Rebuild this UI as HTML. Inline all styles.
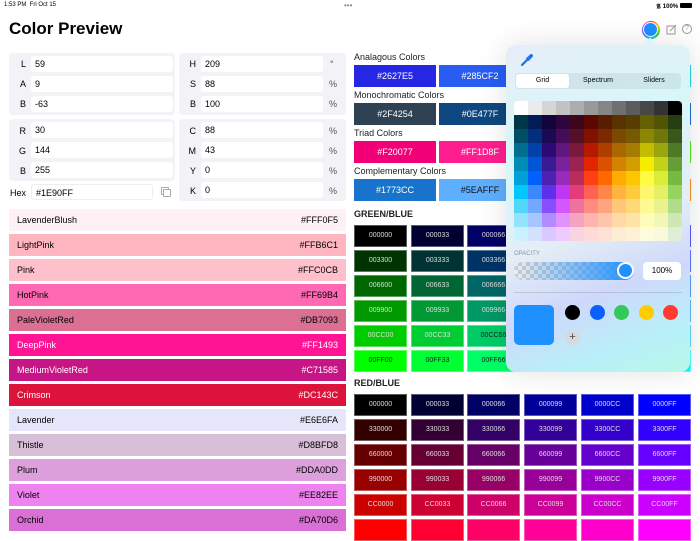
<!DOCTYPE html><html><head><meta charset="utf-8"><style>
*{box-sizing:border-box;margin:0;padding:0}
body{width:700px;height:525px;overflow:hidden;background:#fff;font-family:"Liberation Sans",sans-serif;position:relative;color:#000}
.a{position:absolute}
.grp{position:absolute;background:#f2f2f7;border-radius:4px}
.lb{position:absolute;font-size:9px;width:10px;text-align:right}
.fd{position:absolute;background:#fff;border-radius:3px;height:16px;font-size:9px;padding-left:4px;line-height:16px}
.un{position:absolute;font-size:9px;color:#555}
.row{position:absolute;left:9px;width:337px;height:22px;font-size:9px;line-height:22px;padding:0 8px}
.row span{float:right}
.sec{position:absolute;left:354px;font-size:9px;color:#222}
.sw{position:absolute;width:82px;height:22px;font-size:9px;line-height:22px;text-align:center;color:#fff}
.c{position:absolute;width:53px;height:22px;font-size:7px;line-height:22px;text-align:center;color:#ddd;outline:1px solid rgba(255,255,255,.35);outline-offset:-1px}
.k{color:#222}
.h{font-size:9px;font-weight:bold;position:absolute;left:354px;color:#222}
.pg{display:grid;grid-template-columns:repeat(12,14px);grid-auto-rows:14px}
</style></head><body>
<div class="a" style="left:4px;top:2px;font-size:6px">1:53 PM&nbsp;&nbsp;Fri Oct 15</div>
<div class="a" style="left:344px;top:1px;font-size:8px;color:#888">•••</div>
<div class="a" style="left:656px;top:2px;font-size:6px;font-weight:bold">᯾ 100% <span style="display:inline-block;width:12px;height:5px;background:#000;border-radius:1px"></span></div>
<div class="a" style="left:9px;top:19px;font-size:17px;font-weight:bold">Color Preview</div>
<div class="a" style="left:642px;top:21px;width:18px;height:18px;border-radius:50%;background:conic-gradient(#f33,#fc0,#3c3,#0cf,#36f,#c3f,#f33)"></div>
<div class="a" style="left:643px;top:22px;width:13px;height:13px;border-radius:50%;background:#1e90ff;border:1.5px solid #fff;box-sizing:content-box"></div>
<svg class="a" style="left:666px;top:24px" width="11" height="11" viewBox="0 0 11 11"><rect x="1" y="2" width="8" height="8" fill="none" stroke="#999" stroke-width="1"/><path d="M4 7 L10 1" stroke="#999" stroke-width="1"/></svg>
<div class="a" style="left:682px;top:24px;width:10px;height:10px;border:1px solid #999;border-radius:50%;font-size:7px;line-height:8px;text-align:center;color:#999">?</div>

<div class="grp" style="left:9px;top:53px;width:166px;height:62px"></div>
<div class="grp" style="left:179px;top:53px;width:167px;height:62px"></div>
<div class="grp" style="left:9px;top:119px;width:166px;height:62px"></div>
<div class="grp" style="left:179px;top:119px;width:167px;height:82px"></div>
<div class="lb" style="left:16px;top:59px">L</div><div class="fd" style="left:31px;top:56px;width:142px">59</div>
<div class="lb" style="left:16px;top:79px">A</div><div class="fd" style="left:31px;top:76px;width:142px">9</div>
<div class="lb" style="left:16px;top:99px">B</div><div class="fd" style="left:31px;top:96px;width:142px">-63</div>
<div class="lb" style="left:16px;top:126px">R</div><div class="fd" style="left:31px;top:122px;width:142px">30</div>
<div class="lb" style="left:16px;top:146px">G</div><div class="fd" style="left:31px;top:142px;width:142px">144</div>
<div class="lb" style="left:16px;top:166px">B</div><div class="fd" style="left:31px;top:162px;width:142px">255</div>
<div class="a" style="left:10px;top:188px;font-size:9px">Hex</div><div class="fd" style="left:31px;top:184px;width:122px;border:1px solid #eee">#1E90FF</div>
<div class="a" style="left:161px;top:187px;width:8px;height:8px;border:1px solid #aaa;border-radius:1px"></div>
<div class="a" style="left:163px;top:189px;width:8px;height:8px;border:1px solid #aaa;border-radius:1px;background:#fff"></div>
<div class="lb" style="left:186px;top:59px">H</div><div class="fd" style="left:201px;top:56px;width:122px">209</div><div class="un" style="left:330px;top:59px">°</div>
<div class="lb" style="left:186px;top:79px">S</div><div class="fd" style="left:201px;top:76px;width:122px">88</div><div class="un" style="left:329px;top:79px">%</div>
<div class="lb" style="left:186px;top:99px">B</div><div class="fd" style="left:201px;top:96px;width:122px">100</div><div class="un" style="left:329px;top:99px">%</div>
<div class="lb" style="left:186px;top:126px">C</div><div class="fd" style="left:201px;top:122px;width:122px">88</div><div class="un" style="left:329px;top:126px">%</div>
<div class="lb" style="left:186px;top:146px">M</div><div class="fd" style="left:201px;top:142px;width:122px">43</div><div class="un" style="left:329px;top:146px">%</div>
<div class="lb" style="left:186px;top:166px">Y</div><div class="fd" style="left:201px;top:162px;width:122px">0</div><div class="un" style="left:329px;top:166px">%</div>
<div class="lb" style="left:186px;top:186px">K</div><div class="fd" style="left:201px;top:182px;width:122px">0</div><div class="un" style="left:329px;top:186px">%</div>

<div class="row" style="top:209px;background:#FFF0F5">LavenderBlush<span>#FFF0F5</span></div>
<div class="row" style="top:234px;background:#FFB6C1">LightPink<span>#FFB6C1</span></div>
<div class="row" style="top:259px;background:#FFC0CB">Pink<span>#FFC0CB</span></div>
<div class="row" style="top:284px;background:#FF69B4">HotPink<span>#FF69B4</span></div>
<div class="row" style="top:309px;background:#DB7093">PaleVioletRed<span>#DB7093</span></div>
<div class="row" style="top:334px;background:#FF1493;color:#fff">DeepPink<span>#FF1493</span></div>
<div class="row" style="top:359px;background:#C71585;color:#fff">MediumVioletRed<span>#C71585</span></div>
<div class="row" style="top:384px;background:#DC143C;color:#fff">Crimson<span>#DC143C</span></div>
<div class="row" style="top:409px;background:#E6E6FA">Lavender<span>#E6E6FA</span></div>
<div class="row" style="top:434px;background:#D8BFD8">Thistle<span>#D8BFD8</span></div>
<div class="row" style="top:459px;background:#DDA0DD">Plum<span>#DDA0DD</span></div>
<div class="row" style="top:484px;background:#EE82EE">Violet<span>#EE82EE</span></div>
<div class="row" style="top:509px;background:#DA70D6">Orchid<span>#DA70D6</span></div>

<div class="sec" style="top:52px">Analagous Colors</div>
<div class="sw" style="left:354px;top:65px;background:#2627E5">#2627E5</div>
<div class="sw" style="left:439px;top:65px;background:#285CF2">#285CF2</div>
<div class="sw" style="left:524px;top:65px;background:#1E90FF"></div>
<div class="sw" style="left:609px;top:65px;background:#1ED8E5"></div>
<div class="sec" style="top:90px">Monochromatic Colors</div>
<div class="sw" style="left:354px;top:103px;background:#2F4254">#2F4254</div>
<div class="sw" style="left:439px;top:103px;background:#0E477F">#0E477F</div>
<div class="sw" style="left:524px;top:103px;background:#1E5FB0"></div>
<div class="sw" style="left:609px;top:103px;background:#1E70D0"></div>
<div class="sec" style="top:128px">Triad Colors</div>
<div class="sw" style="left:354px;top:141px;background:#F20077">#F20077</div>
<div class="sw" style="left:439px;top:141px;background:#FF1D8F">#FF1D8F</div>
<div class="sw" style="left:524px;top:141px;background:#90FF1E"></div>
<div class="sw" style="left:609px;top:141px;background:#5AE51E"></div>
<div class="sec" style="top:166px">Complementary Colors</div>
<div class="sw" style="left:354px;top:179px;background:#1773CC">#1773CC</div>
<div class="sw" style="left:439px;top:179px;background:#5EAFFF;color:#111">#5EAFFF</div>
<div class="sw" style="left:524px;top:179px;background:#FF8D1E"></div>
<div class="sw" style="left:609px;top:179px;background:#F0902E"></div>

<div class="h" style="top:209px">GREEN/BLUE</div>
<div class="c" style="left:354px;top:225px;background:#000000">000000</div><div class="c" style="left:411px;top:225px;background:#000033">000033</div><div class="c" style="left:467px;top:225px;background:#000066">000066</div><div class="c" style="left:524px;top:225px;background:#000099">000099</div><div class="c" style="left:581px;top:225px;background:#0000CC">0000CC</div><div class="c" style="left:638px;top:225px;background:#0000FF">0000FF</div>
<div class="c" style="left:354px;top:250px;background:#003300">003300</div><div class="c" style="left:411px;top:250px;background:#003333">003333</div><div class="c" style="left:467px;top:250px;background:#003366">003366</div><div class="c" style="left:524px;top:250px;background:#003399">003399</div><div class="c" style="left:581px;top:250px;background:#0033CC">0033CC</div><div class="c" style="left:638px;top:250px;background:#0033FF">0033FF</div>
<div class="c" style="left:354px;top:275px;background:#006600">006600</div><div class="c" style="left:411px;top:275px;background:#006633">006633</div><div class="c" style="left:467px;top:275px;background:#006666">006666</div><div class="c" style="left:524px;top:275px;background:#006699">006699</div><div class="c" style="left:581px;top:275px;background:#0066CC">0066CC</div><div class="c" style="left:638px;top:275px;background:#0066FF">0066FF</div>
<div class="c" style="left:354px;top:300px;background:#009900">009900</div><div class="c" style="left:411px;top:300px;background:#009933">009933</div><div class="c" style="left:467px;top:300px;background:#009966">009966</div><div class="c" style="left:524px;top:300px;background:#009999">009999</div><div class="c" style="left:581px;top:300px;background:#0099CC">0099CC</div><div class="c" style="left:638px;top:300px;background:#0099FF">0099FF</div>
<div class="c" style="left:354px;top:325px;background:#00CC00">00CC00</div><div class="c" style="left:411px;top:325px;background:#00CC33">00CC33</div><div class="c k" style="left:467px;top:325px;background:#00CC66">00CC66</div><div class="c k" style="left:524px;top:325px;background:#00CC99">00CC99</div><div class="c k" style="left:581px;top:325px;background:#00CCCC">00CCCC</div><div class="c k" style="left:638px;top:325px;background:#00CCFF">00CCFF</div>
<div class="c k" style="left:354px;top:350px;background:#00FF00">00FF00</div><div class="c k" style="left:411px;top:350px;background:#00FF33">00FF33</div><div class="c k" style="left:467px;top:350px;background:#00FF66">00FF66</div><div class="c k" style="left:524px;top:350px;background:#00FF99">00FF99</div><div class="c k" style="left:581px;top:350px;background:#00FFCC">00FFCC</div><div class="c k" style="left:638px;top:350px;background:#00FFFF">00FFFF</div>

<div class="h" style="top:378px">RED/BLUE</div>
<div class="c" style="left:354px;top:394px;background:#000000">000000</div><div class="c" style="left:411px;top:394px;background:#000033">000033</div><div class="c" style="left:467px;top:394px;background:#000066">000066</div><div class="c" style="left:524px;top:394px;background:#000099">000099</div><div class="c" style="left:581px;top:394px;background:#0000CC">0000CC</div><div class="c" style="left:638px;top:394px;background:#0000FF">0000FF</div>
<div class="c" style="left:354px;top:419px;background:#330000">330000</div><div class="c" style="left:411px;top:419px;background:#330033">330033</div><div class="c" style="left:467px;top:419px;background:#330066">330066</div><div class="c" style="left:524px;top:419px;background:#330099">330099</div><div class="c" style="left:581px;top:419px;background:#3300CC">3300CC</div><div class="c" style="left:638px;top:419px;background:#3300FF">3300FF</div>
<div class="c" style="left:354px;top:444px;background:#660000">660000</div><div class="c" style="left:411px;top:444px;background:#660033">660033</div><div class="c" style="left:467px;top:444px;background:#660066">660066</div><div class="c" style="left:524px;top:444px;background:#660099">660099</div><div class="c" style="left:581px;top:444px;background:#6600CC">6600CC</div><div class="c" style="left:638px;top:444px;background:#6600FF">6600FF</div>
<div class="c" style="left:354px;top:469px;background:#990000">990000</div><div class="c" style="left:411px;top:469px;background:#990033">990033</div><div class="c" style="left:467px;top:469px;background:#990066">990066</div><div class="c" style="left:524px;top:469px;background:#990099">990099</div><div class="c" style="left:581px;top:469px;background:#9900CC">9900CC</div><div class="c" style="left:638px;top:469px;background:#9900FF">9900FF</div>
<div class="c" style="left:354px;top:494px;background:#CC0000">CC0000</div><div class="c" style="left:411px;top:494px;background:#CC0033">CC0033</div><div class="c" style="left:467px;top:494px;background:#CC0066">CC0066</div><div class="c" style="left:524px;top:494px;background:#CC0099">CC0099</div><div class="c" style="left:581px;top:494px;background:#CC00CC">CC00CC</div><div class="c" style="left:638px;top:494px;background:#CC00FF">CC00FF</div>
<div class="c" style="left:354px;top:519px;background:#FF0000"></div><div class="c" style="left:411px;top:519px;background:#FF0033"></div><div class="c" style="left:467px;top:519px;background:#FF0066"></div><div class="c" style="left:524px;top:519px;background:#FF0099"></div><div class="c" style="left:581px;top:519px;background:#FF00CC"></div><div class="c" style="left:638px;top:519px;background:#FF00FF"></div>

<!-- popover -->
<div class="a" style="left:506px;top:45px;width:184px;height:327px;border-radius:10px;background:linear-gradient(160deg,#e6eef8 0%,#d8f6f8 30%,#e4eef6 55%,#cfd8fa 72%,#b8f0f8 88%,#b8f8e8 100%);box-shadow:0 0 30px rgba(0,0,0,.12)"></div>
<div class="a" style="left:644px;top:40px;width:12px;height:12px;background:#e0f2f6;transform:rotate(45deg)"></div>
<svg class="a" style="left:520px;top:53px" width="14" height="14" viewBox="0 0 14 14"><path d="M2 12 L8 6" stroke="#1e6ff0" stroke-width="2.2" stroke-linecap="round"/><path d="M7.5 4 L10 1.5 Q11.5 0.5 12.5 1.5 Q13.5 2.5 12.5 4 L10 6.5 Z" fill="#1e6ff0"/><path d="M6.5 4.5 L9.5 7.5" stroke="#1e6ff0" stroke-width="1.8"/></svg>
<div class="a" style="left:515px;top:73px;width:166px;height:16px;background:rgba(120,150,160,.15);border-radius:4px"></div>
<div class="a" style="left:516px;top:74px;width:53px;height:14px;background:#fff;border-radius:3px;font-size:7px;line-height:14px;text-align:center">Grid</div>
<div class="a" style="left:571px;top:74px;width:54px;font-size:7px;line-height:14px;text-align:center">Spectrum</div>
<div class="a" style="left:627px;top:74px;width:54px;font-size:7px;line-height:14px;text-align:center">Sliders</div>
<div class="a pg" style="left:514px;top:101px;border-radius:4px;overflow:hidden;width:168px">
<div style="background:#ffffff"></div><div style="background:#ebebeb"></div><div style="background:#d6d6d6"></div><div style="background:#c2c2c2"></div><div style="background:#adadad"></div><div style="background:#999999"></div><div style="background:#858585"></div><div style="background:#707070"></div><div style="background:#5c5c5c"></div><div style="background:#474747"></div><div style="background:#333333"></div><div style="background:#000000"></div>
<div style="background:#003748"></div><div style="background:#011d57"></div><div style="background:#11053b"></div><div style="background:#2e063d"></div><div style="background:#3c071b"></div><div style="background:#5c0701"></div><div style="background:#5a1c00"></div><div style="background:#583300"></div><div style="background:#563d00"></div><div style="background:#666100"></div><div style="background:#4f5504"></div><div style="background:#263e0f"></div>
<div style="background:#004d65"></div><div style="background:#012f7b"></div><div style="background:#1a0a52"></div><div style="background:#450d59"></div><div style="background:#551029"></div><div style="background:#831100"></div><div style="background:#7b2900"></div><div style="background:#7a4a00"></div><div style="background:#785800"></div><div style="background:#8d8602"></div><div style="background:#6f760a"></div><div style="background:#38571a"></div>
<div style="background:#016e8f"></div><div style="background:#0042a9"></div><div style="background:#2c0977"></div><div style="background:#61187c"></div><div style="background:#791a3d"></div><div style="background:#b51a00"></div><div style="background:#ad3e00"></div><div style="background:#a96800"></div><div style="background:#a67b01"></div><div style="background:#c4bc00"></div><div style="background:#9ba50e"></div><div style="background:#4e7a27"></div>
<div style="background:#008cb4"></div><div style="background:#0056d6"></div><div style="background:#371a94"></div><div style="background:#7a219e"></div><div style="background:#99244f"></div><div style="background:#e22400"></div><div style="background:#da5100"></div><div style="background:#d38301"></div><div style="background:#d19d01"></div><div style="background:#f5ec00"></div><div style="background:#c3d117"></div><div style="background:#669d34"></div>
<div style="background:#00a1d8"></div><div style="background:#0061fe"></div><div style="background:#4d22b2"></div><div style="background:#982abc"></div><div style="background:#b92d5d"></div><div style="background:#ff4015"></div><div style="background:#ff6a00"></div><div style="background:#ffab01"></div><div style="background:#fcc700"></div><div style="background:#fefb41"></div><div style="background:#d9ec37"></div><div style="background:#76bb40"></div>
<div style="background:#01c7fc"></div><div style="background:#3a87fe"></div><div style="background:#5e30eb"></div><div style="background:#be38f3"></div><div style="background:#e63b7a"></div><div style="background:#fe6250"></div><div style="background:#fe8648"></div><div style="background:#feb43f"></div><div style="background:#fecb3e"></div><div style="background:#fff76b"></div><div style="background:#e4ef65"></div><div style="background:#96d35f"></div>
<div style="background:#52d6fc"></div><div style="background:#74a7ff"></div><div style="background:#864ffe"></div><div style="background:#d357fe"></div><div style="background:#ee719e"></div><div style="background:#ff8c82"></div><div style="background:#fea57d"></div><div style="background:#ffc777"></div><div style="background:#fed977"></div><div style="background:#fff994"></div><div style="background:#eaf28f"></div><div style="background:#b1dd8b"></div>
<div style="background:#93e3fc"></div><div style="background:#a7c6ff"></div><div style="background:#b18cfe"></div><div style="background:#e292fe"></div><div style="background:#f4a4c0"></div><div style="background:#ffb5af"></div><div style="background:#ffc5ab"></div><div style="background:#ffd9a8"></div><div style="background:#fee4a8"></div><div style="background:#fffbb9"></div><div style="background:#f2f7b7"></div><div style="background:#cde8b5"></div>
<div style="background:#cbf0ff"></div><div style="background:#d3e2ff"></div><div style="background:#d9c9fe"></div><div style="background:#efcaff"></div><div style="background:#f9d3e0"></div><div style="background:#ffdbd8"></div><div style="background:#ffe2d6"></div><div style="background:#ffecd4"></div><div style="background:#fef1d5"></div><div style="background:#fefcdd"></div><div style="background:#f9fadb"></div><div style="background:#dfeed4"></div>
</div>
<div class="a" style="left:514px;top:251px;font-size:6px;color:#8a93a0">OPACITY</div>
<div class="a" style="left:514px;top:262px;width:120px;height:18px;border-radius:9px;background:linear-gradient(90deg,rgba(30,144,255,0),#1e90ff),repeating-conic-gradient(#ccc 0 25%,#eee 0 50%) 0 0/8px 8px"></div>
<div class="a" style="left:617px;top:262px;width:17px;height:17px;border-radius:50%;background:#1e90ff;border:2px solid #fff"></div>
<div class="a" style="left:643px;top:262px;width:38px;height:18px;background:#fff;border-radius:4px;font-size:8px;line-height:18px;text-align:center">100%</div>
<div class="a" style="left:514px;top:292px;width:168px;height:1px;background:rgba(0,0,0,.12)"></div>
<div class="a" style="left:514px;top:305px;width:40px;height:40px;background:#1e90ff;border-radius:5px"></div>
<div class="a" style="left:565px;top:305px;width:15px;height:15px;border-radius:50%;background:#000"></div>
<div class="a" style="left:590px;top:305px;width:15px;height:15px;border-radius:50%;background:#0a60ff"></div>
<div class="a" style="left:614px;top:305px;width:15px;height:15px;border-radius:50%;background:#34c759"></div>
<div class="a" style="left:639px;top:305px;width:15px;height:15px;border-radius:50%;background:#ffcc00"></div>
<div class="a" style="left:663px;top:305px;width:15px;height:15px;border-radius:50%;background:#ff3b30"></div>
<div class="a" style="left:565px;top:330px;width:15px;height:15px;border-radius:50%;background:#d6d9dd;font-size:11px;line-height:15px;text-align:center;color:#444">+</div>
</body></html>
